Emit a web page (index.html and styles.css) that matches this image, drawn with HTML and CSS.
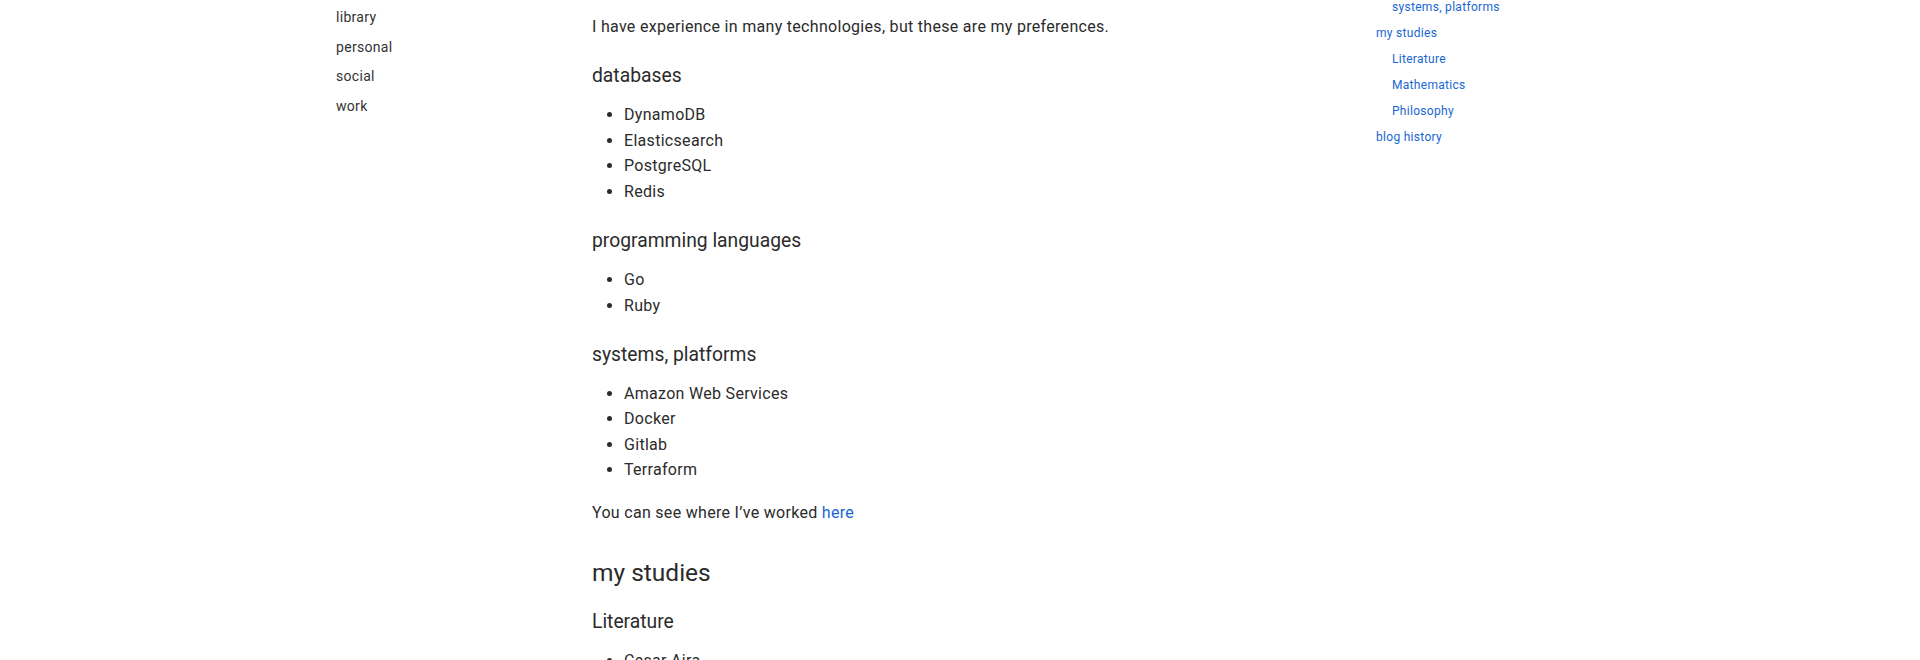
FILE: index.html
```html
<!DOCTYPE html>
<html lang="en">
<head>
  <meta charset="UTF-8" />
  <meta name="viewport" content="width=device-width, initial-scale=1.0" />
  <title>about me</title>
  <link rel="stylesheet" href="styles.css">
</head>
<body>
  <div class="layout">
    <!-- Site navigation -->
    <nav class="sidenav">
      <a href="#">library</a>
      <a href="#">personal</a>
      <a href="#">social</a>
      <a href="#">work</a>
    </nav>

    <main class="content">
      <p class="lead">I have experience in many technologies, but these are my preferences.</p>

      <h3 id="databases">databases</h3>
      <ul>
        <li>DynamoDB</li>
        <li>Elasticsearch</li>
        <li>PostgreSQL</li>
        <li>Redis</li>
      </ul>

      <h3 id="programming-languages">programming languages</h3>
      <ul>
        <li>Go</li>
        <li>Ruby</li>
      </ul>

      <h3 id="systems-platforms">systems, platforms</h3>
      <ul>
        <li>Amazon Web Services</li>
        <li>Docker</li>
        <li>Gitlab</li>
        <li>Terraform</li>
      </ul>

      <p>You can see where I’ve worked <a href="#">here</a></p>

      <h2 id="my-studies">my studies</h2>

      <h3 id="literature">Literature</h3>
      <ul>
        <li>Cesar Aira</li>
      </ul>
    </main>

    <!-- Table of contents -->
    <aside class="toc">
      <ul>
        <li class="sub"><a href="#systems-platforms">systems, platforms</a></li>
        <li><a href="#my-studies">my studies</a></li>
        <li class="sub"><a href="#literature">Literature</a></li>
        <li class="sub"><a href="#">Mathematics</a></li>
        <li class="sub"><a href="#">Philosophy</a></li>
        <li><a href="#">blog history</a></li>
      </ul>
    </aside>
  </div>
</body>
</html>
```

FILE: styles.css
```css
* {
  box-sizing: border-box;
}

html, body {
  height: 100%;
  overflow: hidden;
}

body {
  margin: 0;
  font-family: Roboto, "Liberation Sans", sans-serif;
  color: #2b2b2b;
  background-color: #fff;
  letter-spacing: 0.3px;
}

a {
  color: #1967d2;
  text-decoration: none;
}

.layout {
  display: grid;
  grid-template-columns: 257px 784px 1fr;
  width: 1250px;
  margin: 0 auto;
}

/* left navigation */
.sidenav {
  display: flex;
  flex-direction: column;
  padding: 3px 0 0 1px;
}
.sidenav a {
  color: #333;
  font-size: 14px;
  line-height: 29.5px;
}

/* main column */
.content {
  padding-top: 14px;
  font-size: 16px;
  line-height: 1.6;
}
.content p {
  margin: 17px 0;
}
.content p.lead {
  margin-top: 0;
}
.content h2 {
  font-size: 24.5px;
  font-weight: 400;
  letter-spacing: 0;
  line-height: 1.3;
  margin: 31px 0 16px;
}
.content h3 {
  font-size: 19.3px;
  font-weight: 400;
  letter-spacing: 0;
  line-height: 32px;
  margin: 20.5px 0 10px;
}
.content h2 + h3 {
  margin-top: 18px;
}
.content ul {
  margin: 10px 0 16px;
  padding-left: 32px;
}

/* right table of contents */
.toc {
  margin-top: -5px;
}
.toc ul {
  list-style: none;
  margin: 0;
  padding: 0;
}
.toc li {
  font-size: 12px;
  line-height: 25.9px;
}
.toc li.sub {
  padding-left: 16px;
}
```
